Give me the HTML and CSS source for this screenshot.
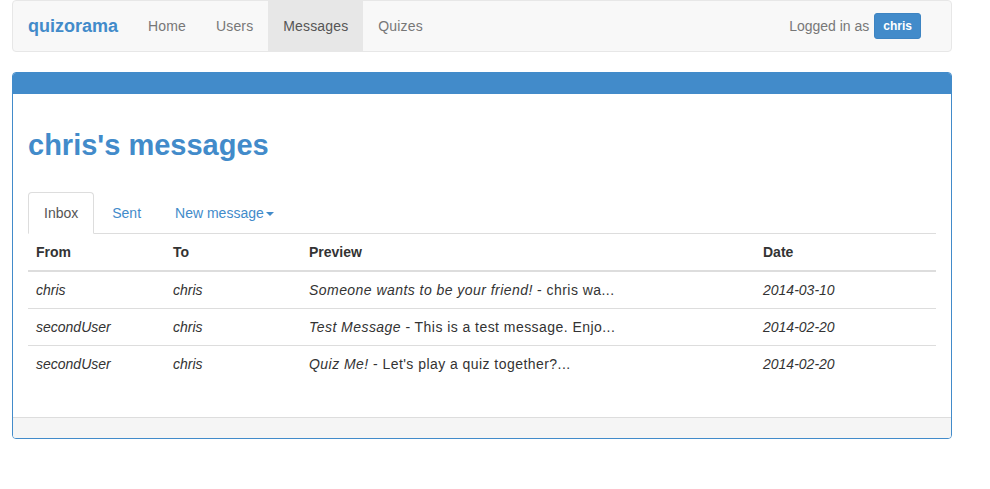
FILE: index.html
```html
<!DOCTYPE html>
<html>
<head>
<meta charset="utf-8">
<link rel="stylesheet" href="styles.css">
</head>
<body>
<div class="container">
  <nav class="navbar">
    <a class="brand" href="#">quizorama</a>
    <ul class="nav">
      <li><a href="#">Home</a></li>
      <li><a href="#">Users</a></li>
      <li class="active"><a href="#">Messages</a></li>
      <li><a href="#">Quizes</a></li>
    </ul>
    <div class="nav-right">
      <span class="logged">Logged in as</span>
      <a class="user-btn" href="#">chris</a>
    </div>
  </nav>

  <div class="panel">
    <div class="panel-heading"></div>
    <div class="panel-body">
      <h2 class="title">chris's messages</h2>
      <ul class="tabs">
        <li class="active"><a href="#">Inbox</a></li>
        <li><a href="#">Sent</a></li>
        <li><a href="#">New message<span class="caret"></span></a></li>
      </ul>
      <table class="table">
        <thead>
          <tr><th class="c-from">From</th><th class="c-to">To</th><th class="c-prev">Preview</th><th class="c-date">Date</th></tr>
        </thead>
        <tbody>
          <tr><td><em>chris</em></td><td><em>chris</em></td><td class="prev"><em>Someone wants to be your friend!</em> - chris wa...</td><td><em>2014-03-10</em></td></tr>
          <tr><td><em>secondUser</em></td><td><em>chris</em></td><td class="prev"><em>Test Message</em> - This is a test message. Enjo...</td><td><em>2014-02-20</em></td></tr>
          <tr><td><em>secondUser</em></td><td><em>chris</em></td><td class="prev"><em>Quiz Me!</em> - Let's play a quiz together?...</td><td><em>2014-02-20</em></td></tr>
        </tbody>
      </table>
    </div>
    <div class="panel-footer"></div>
  </div>
</div>
</body>
</html>
```

FILE: styles.css
```css
* { box-sizing: border-box; }
html, body { margin: 0; padding: 0; }
body {
  font-family: "Liberation Sans", Arial, sans-serif;
  font-size: 14px;
  line-height: 20px;
  color: #333;
  background: #fff;
}
a { text-decoration: none; }
.container { width: 940px; margin-left: 12px; }

.navbar {
  display: flex;
  align-items: center;
  height: 52px;
  background: #f8f8f8;
  border: 1px solid #e7e7e7;
  border-radius: 4px;
  margin-bottom: 20px;
}
.brand {
  padding: 15px;
  font-size: 18px;
  font-weight: bold;
  line-height: 20px;
  color: #428bca;
}
.nav { list-style: none; margin: 0; padding: 0; display: flex; height: 50px; }
.nav li a {
  display: block;
  padding: 15px;
  line-height: 20px;
  color: #777;
  letter-spacing: 0.15px;
}
.nav li.active a { background: #e7e7e7; color: #555; }
.nav-right { margin-left: auto; display: flex; align-items: center; padding-right: 30px; }
.logged { color: #777; margin-right: 5px; }
.user-btn {
  display: block;
  background: #428bca;
  color: #fff;
  font-size: 12px;
  font-weight: bold;
  line-height: 16px;
  padding: 4px 8px;
  border-radius: 3px;
  border: 1px solid #3d84c2;
}

.panel {
  border: 1px solid #428bca;
  border-radius: 4px;
  overflow: hidden;
}
.panel-heading { height: 21px; background: #428bca; }
.panel-body { padding: 15px; }
.title {
  margin: 20px 0 30px;
  font-size: 29px;
  line-height: 33px;
  font-weight: bold;
  color: #428bca;
}
.tabs {
  list-style: none;
  margin: 0;
  padding: 0;
  display: flex;
  border-bottom: 1px solid #ddd;
}
.tabs li { margin-bottom: -1px; margin-right: 2px; }
.tabs li a {
  display: block;
  padding: 10px 15px;
  line-height: 20px;
  color: #428bca;
  border: 1px solid transparent;
  border-radius: 4px 4px 0 0;
}
.tabs li.active a {
  color: #555;
  background: #fff;
  border-color: #ddd #ddd transparent;
}
.caret {
  display: inline-block;
  width: 0; height: 0;
  margin-left: 2px;
  vertical-align: middle;
  border-top: 4px solid #428bca;
  border-left: 4px solid transparent;
  border-right: 4px solid transparent;
}
.table { width: 100%; border-collapse: collapse; margin-bottom: 20px; }
.table th, .table td { padding: 8px; text-align: left; line-height: 20px; vertical-align: top; }
.table th { border-bottom: 2px solid #ddd; font-weight: bold; }
.table td { border-top: 1px solid #ddd; }
.table td.prev { letter-spacing: 0.45px; }
.table tbody tr:first-child td { border-top: 0; }
.c-from { width: 137px; }
.c-to { width: 136px; }
.c-prev { width: 454px; }
.panel-footer {
  height: 21px;
  background: #f5f5f5;
  border-top: 1px solid #ddd;
}
```
